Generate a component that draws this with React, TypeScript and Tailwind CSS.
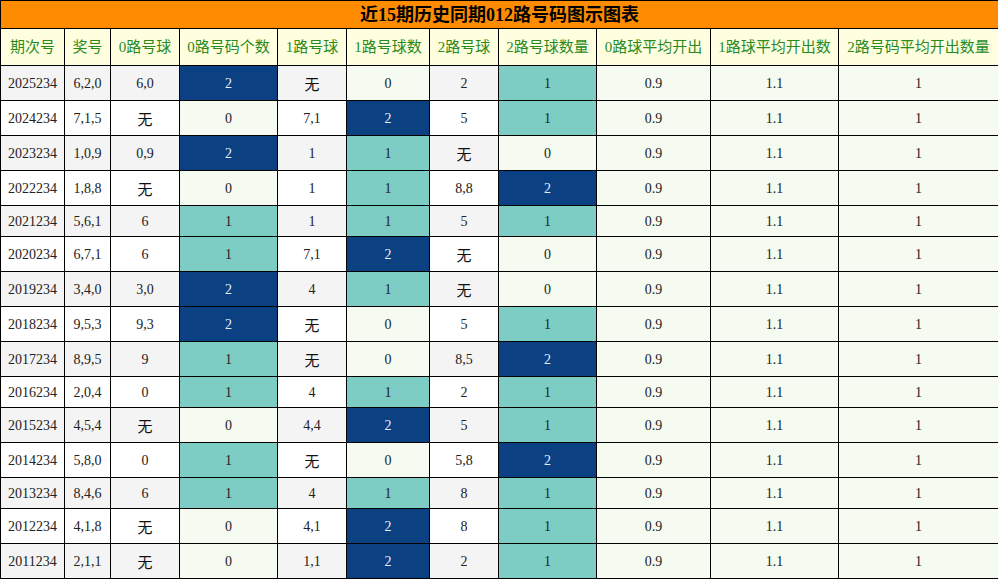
import React from "react";

const heads = [
  "期次号",
  "奖号",
  "0路号球",
  "0路号码个数",
  "1路号球",
  "1路号球数",
  "2路号球",
  "2路号球数量",
  "0路球平均开出",
  "1路球平均开出数",
  "2路号码平均开出数量",
];

const widths = [64, 46, 69, 98, 69, 83, 69, 98, 114, 128, 160];

// 期次号, 奖号, 0路, 0路个数, 1路, 1路个数, 2路, 2路个数
const rows: string[][] = [
  ["2025234", "6,2,0", "6,0", "2", "无", "0", "2", "1"],
  ["2024234", "7,1,5", "无", "0", "7,1", "2", "5", "1"],
  ["2023234", "1,0,9", "0,9", "2", "1", "1", "无", "0"],
  ["2022234", "1,8,8", "无", "0", "1", "1", "8,8", "2"],
  ["2021234", "5,6,1", "6", "1", "1", "1", "5", "1"],
  ["2020234", "6,7,1", "6", "1", "7,1", "2", "无", "0"],
  ["2019234", "3,4,0", "3,0", "2", "4", "1", "无", "0"],
  ["2018234", "9,5,3", "9,3", "2", "无", "0", "5", "1"],
  ["2017234", "8,9,5", "9", "1", "无", "0", "8,5", "2"],
  ["2016234", "2,0,4", "0", "1", "4", "1", "2", "1"],
  ["2015234", "4,5,4", "无", "0", "4,4", "2", "5", "1"],
  ["2014234", "5,8,0", "0", "1", "无", "0", "5,8", "2"],
  ["2013234", "8,4,6", "6", "1", "4", "1", "8", "1"],
  ["2012234", "4,1,8", "无", "0", "4,1", "2", "8", "1"],
  ["2011234", "2,1,1", "无", "0", "1,1", "2", "2", "1"],
];

const countBg = (v: string) =>
  v === "2"
    ? "bg-[#0b4083] text-[#e8eef6]"
    : v === "1"
    ? "bg-[#7ecdc5] text-[#222]"
    : "bg-[#f5fbf0] text-[#222]";

const App = () => {
  return (
    <div className="w-[998px] font-['Liberation_Serif','Noto_Sans_CJK_SC',serif] text-[#222]">
      <table className="w-[998px] table-fixed border-collapse">
        <colgroup>
          {widths.map((w, i) => (
            <col key={i} style={{ width: w }} />
          ))}
        </colgroup>
        <thead>
          <tr className="h-[28px]">
            <th
              colSpan={11}
              className="border border-black bg-[#ff8c00] text-[18px] font-bold text-black p-0 leading-none"
            >
              近15期历史同期012路号码图示图表
            </th>
          </tr>
          <tr className="h-[37px]">
            {heads.map((h) => (
              <th
                key={h}
                className="border border-black bg-[#ffffe0] text-[15px] font-normal text-[#2a8a1e] p-0 whitespace-nowrap"
              >
                {h}
              </th>
            ))}
          </tr>
        </thead>
        <tbody className="text-[14px]">
          {rows.map((r, i) => {
            const tall = r.includes("无");
            const base = i % 2 === 0 ? "bg-[#f4f4f4]" : "bg-white";
            return (
              <tr key={r[0]} className={tall ? "h-[35px]" : "h-[31px]"}>
                {r.map((c, j) => {
                  const isCount = j === 3 || j === 5 || j === 7;
                  const bg = isCount ? countBg(c) : base;
                  return (
                    <td
                      key={j}
                      className={`border border-black p-0 text-center ${bg} ${
                        c === "无" ? "text-[15px] pt-[4px] text-[#111]" : ""
                      }`}
                    >
                      {c}
                    </td>
                  );
                })}
                <td className="border border-black p-0 text-center bg-[#f5fbf0]">0.9</td>
                <td className="border border-black p-0 text-center bg-[#f5fbf0]">1.1</td>
                <td className="border border-black p-0 text-center bg-[#f5fbf0]">1</td>
              </tr>
            );
          })}
        </tbody>
      </table>
    </div>
  );
};

export default App;
